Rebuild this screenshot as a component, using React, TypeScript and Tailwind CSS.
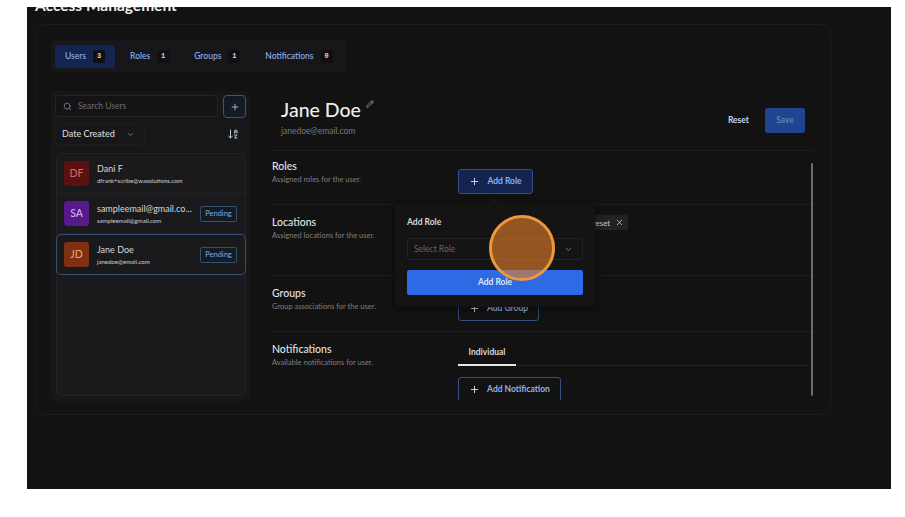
import React from 'react';
import { Search, Plus, ChevronDown, ArrowDownAZ, Pencil, X } from 'lucide-react';

const tabs = [
    { label: 'Users', count: 3, active: true },
    { label: 'Roles', count: 1 },
    { label: 'Groups', count: 1 },
    { label: 'Notifications', count: 0 },
];

const users = [
    { initials: 'DF', name: 'Dani F', email: 'dfrank+scribe@wasolutions.com', tile: 'bg-[#5c1111] text-[#d9666a]' },
    { initials: 'SA', name: 'sampleemail@gmail.co...', email: 'sampleemail@gmail.com', tile: 'bg-[#57198c] text-[#d3b4ef]', pending: true },
    { initials: 'JD', name: 'Jane Doe', email: 'janedoe@email.com', tile: 'bg-[#7f2f12] text-[#eba273]', pending: true, selected: true },
];

function SectionLabel({ title, text }: { title: string; text: string }) {
    return (
        <div className="w-[186px] shrink-0">
            <div className="text-[10.5px] leading-[14px] font-medium text-[#e2e2e2]">{title}</div>
            <div className="mt-[1px] text-[7.5px] leading-[12px] text-[#7f7f7f]">{text}</div>
        </div>
    );
}

function AddButton({ label, width, muted }: { label: string; width: string; muted?: boolean }) {
    return (
        <button className={`${width} h-[25px] shrink-0 flex items-center justify-center gap-[7px] rounded-[3px] border border-[#34507f] ${muted ? '' : 'bg-[#12244f]'} text-[8.5px] font-bold text-[#8fb2ea]`}>
            <Plus className="w-[11px] h-[11px] text-[#d5deee]" />
            {label}
        </button>
    );
}

export default function App() {
    return (
        <div className="w-[905px] h-[517px] overflow-hidden bg-white pt-[7px] pl-[27px] font-['Lato','Liberation_Sans',sans-serif]">
            <div className="w-[864px] h-[482px] overflow-hidden bg-[#121212] pl-[8px]">
                <div className="h-[17px] -mt-[10px] text-[15.5px] leading-[17px] font-bold text-[#f0f0f0] whitespace-nowrap">
                    Access Management
                </div>

                <div className="mt-[10px] w-[796px] h-[391px] rounded-[10px] border border-[#1c1c1e] pl-[15px] pt-[15px]">
                    <div className="w-[296px] h-[32px] flex items-center gap-[5px] rounded-[5px] bg-[#17171a] px-[4px]">
                        {tabs.map((tab) => (
                            <div key={tab.label} className={`h-[23px] flex items-center gap-[7px] rounded-[3px] px-[10px] ${tab.active ? 'bg-[#12244f]' : ''}`}>
                                <span className="text-[8.5px] font-medium text-[#8fb2ea]">{tab.label}</span>
                                <span className="w-[12px] h-[13px] flex items-center justify-center rounded-[2px] bg-[#101012] text-[7px] font-bold text-[#d8d8d8] font-['Liberation_Mono',monospace]">{tab.count}</span>
                            </div>
                        ))}
                    </div>

                    <div className="mt-[19px] flex">
                        <div className="w-[199px] h-[310px] shrink-0 rounded-[5px] bg-[#17171a] p-[4px]">
                            <div className="flex gap-[5px]">
                                <div className="w-[163px] h-[22px] flex items-center gap-[6px] rounded-[4px] border border-[#232326] bg-[#141416] pl-[7px]">
                                    <Search className="w-[9px] h-[9px] text-[#8a8a8a]" />
                                    <span className="text-[8.5px] text-[#6e6e6e]">Search Users</span>
                                </div>
                                <div className="w-[23px] h-[23px] flex items-center justify-center rounded-[4px] border border-[#3d5675] bg-[#131a24]">
                                    <Plus className="w-[10px] h-[10px] text-[#b9c8da]" />
                                </div>
                            </div>

                            <div className="mt-[5px] flex items-center justify-between pr-[7px]">
                                <div className="w-[90px] h-[22px] flex items-center gap-[11px] rounded-[4px] border border-[#1d1d20] pl-[6px]">
                                    <span className="text-[9px] font-medium text-[#d8d8d8]">Date Created</span>
                                    <ChevronDown className="w-[9px] h-[9px] text-[#8a8a8a]" />
                                </div>
                                <ArrowDownAZ className="w-[12px] h-[12px] text-[#b9c8da]" />
                            </div>

                            <div className="mt-[8px] ml-[1px] w-[190px] h-[243px] rounded-[5px] border border-[#232326] bg-[#1a1a1d]">
                                {users.map((user) => (
                                    <div
                                        key={user.initials}
                                        className={`flex items-center pl-[7px] pr-[8px] ${user.selected ? 'h-[41px] -mx-px rounded-[5px] border border-[#35506f]' : 'h-[40px] border-b border-[#232326]'}`}
                                    >
                                        <div className={`w-[25px] h-[25px] shrink-0 flex items-center justify-center rounded-[3px] text-[10.5px] font-medium ${user.tile}`}>
                                            {user.initials}
                                        </div>
                                        <div className="ml-[8px] min-w-0 flex-1">
                                            <div className="text-[9px] leading-[12px] text-[#d6d6d6] whitespace-nowrap">{user.name}</div>
                                            <div className="mt-[1px] text-[6px] leading-[9px] font-medium text-[#c4c4c4] whitespace-nowrap">{user.email}</div>
                                        </div>
                                        {user.pending && (
                                            <div className="w-[37px] h-[16px] shrink-0 flex items-center justify-center rounded-[2px] border border-[#35506f] bg-[#141a26] text-[7.5px] text-[#88a8d8]">
                                                Pending
                                            </div>
                                        )}
                                    </div>
                                ))}
                            </div>
                        </div>

                        <div className="ml-[22px] w-[543px]">
                            <div className="h-[60px] flex pl-[9px] border-b border-[#1c1c1e]">
                                <div className="pt-[6px]">
                                    <div className="flex items-start gap-[5px]">
                                        <span className="text-[19.5px] leading-[26px] font-medium text-[#ededed]">Jane Doe</span>
                                        <Pencil className="mt-[3px] w-[8px] h-[8px] text-[#a8bad0]" />
                                    </div>
                                    <div className="mt-[2px] text-[8.5px] leading-[12px] text-[#7a7a7a]">janedoe@email.com</div>
                                </div>
                                <div className="ml-auto mr-[10px] mt-[17px] h-[25px] flex items-center gap-[16px]">
                                    <span className="text-[8.5px] font-bold text-[#c5d5ee]">Reset</span>
                                    <button className="w-[40px] h-[25px] rounded-[3px] bg-[#1f4490] text-[8.5px] font-medium text-[#6f8bbd]">Save</button>
                                </div>
                            </div>

                            <div className="relative h-[249px] overflow-hidden">
                                <div className="absolute right-[2px] top-[12px] w-[2px] h-[233px] rounded-full bg-[#6b6b6b]" />

                                <div className="h-[54px] flex pt-[8px] pr-[6px] border-b border-[#1c1c1e]">
                                    <SectionLabel title="Roles" text="Assigned roles for the user." />
                                    <div className="pt-[10px]">
                                        <AddButton label="Add Role" width="w-[75px]" />
                                    </div>
                                </div>

                                <div className="h-[71px] flex pt-[10px] border-b border-[#1c1c1e]">
                                    <SectionLabel title="Locations" text="Assigned locations for the user." />
                                    <div className="ml-[108px] h-[15px] flex items-center gap-[5px] rounded-[2px] bg-[#222224] pl-[22px] pr-[4px]">
                                        <span className="text-[8px] text-[#c9c9c9]">Preset</span>
                                        <X className="w-[9px] h-[9px] text-[#c9c9c9]" />
                                    </div>
                                </div>

                                <div className="h-[56px] flex pt-[10px] border-b border-[#1c1c1e]">
                                    <SectionLabel title="Groups" text="Group associations for the user." />
                                    <div className="pt-[10px]">
                                        <AddButton label="Add Group" width="w-[81px]" muted />
                                    </div>
                                </div>

                                <div className="flex pt-[10px]">
                                    <SectionLabel title="Notifications" text="Available notifications for user." />
                                    <div className="flex-1 pr-[5px]">
                                        <div className="h-[24px] border-b border-[#232326]">
                                            <div className="w-[58px] h-[24px] text-center border-b-2 border-[#e6e6e6] pt-[4px] text-[8.5px] font-bold text-[#d8d8d8]">Individual</div>
                                        </div>
                                        <div className="mt-[11px]">
                                            <AddButton label="Add Notification" width="w-[103px]" muted />
                                        </div>
                                    </div>
                                </div>

                                {/* add role popover */}
                                <div className="absolute left-[123px] top-[52px] w-[200px] h-[104px] rounded-[4px] bg-[#141414] shadow-[0_2px_10px_rgba(0,0,0,0.5)] px-[12px] pt-[13px]">
                                    <div className="absolute left-[96px] -top-[4px] w-[8px] h-[8px] rotate-45 bg-[#141414]" />
                                    <div className="text-[8.5px] leading-[12px] font-bold text-[#d8d8d8]">Add Role</div>
                                    <div className="mt-[10px] h-[22px] flex items-center justify-between rounded-[3px] border border-[#232326] pl-[6px] pr-[9px]">
                                        <span className="text-[8.5px] text-[#666666]">Select Role</span>
                                        <ChevronDown className="w-[9px] h-[9px] text-[#9a9a9a]" />
                                    </div>
                                    <button className="mt-[10px] w-full h-[25px] rounded-[2px] bg-[#2d6ae3] text-[8.5px] font-bold text-[#dfe8f8]">Add Role</button>

                                    {/* click highlight */}
                                    <div className="absolute left-[94px] top-[12px] w-[66px] h-[66px] rounded-full border-[3px] border-[#f0963c] bg-[rgba(226,128,44,0.62)]" />
                                </div>
                            </div>
                        </div>
                    </div>
                </div>
            </div>
        </div>
    );
}
